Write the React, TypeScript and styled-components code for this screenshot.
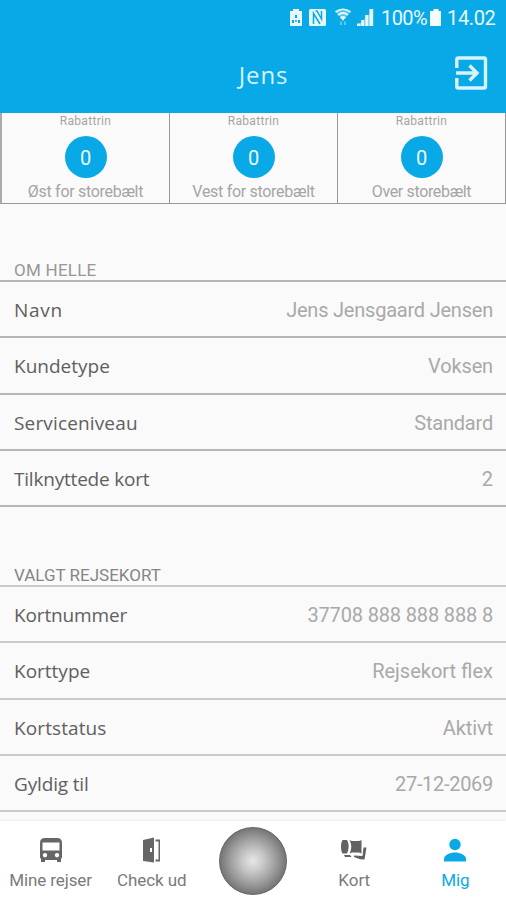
import React from "react";
import styled, { createGlobalStyle } from "styled-components";

const BLUE = "#08a9e6";

const Global = createGlobalStyle`
  * { box-sizing: border-box; }
  body { margin: 0; background: #fafafa; font-family: Roboto, sans-serif; }
`;

const Screen = styled.div`
  width: 506px;
  height: 900px;
  display: flex;
  flex-direction: column;
  overflow: hidden;
  background: #fafafa;
`;

const Header = styled.header`
  height: 113px;
  flex: none;
  background: ${BLUE};
  color: #e9f8fe;
`;

const StatusBar = styled.div`
  height: 36px;
  display: flex;
  justify-content: flex-end;
  align-items: center;
  padding-right: 10px;
`;

const StatusIcons = styled.svg`
  display: block;
  width: 93px;
  height: 36px;
`;

const StatusText = styled.span<{ $width: number; $spacing: number }>`
  width: ${(p) => p.$width}px;
  font-size: 20px;
  line-height: 36px;
  white-space: nowrap;
  letter-spacing: ${(p) => p.$spacing}px;
`;

const BatteryIcon = styled.svg`
  display: block;
  width: 18px;
  height: 36px;
`;

const TitleBar = styled.div`
  height: 77px;
  display: grid;
  grid-template-columns: 60px 1fr 60px;
  align-items: center;
`;

const Title = styled.h1`
  grid-column: 2;
  margin: 0;
  padding-left: 21px;
  text-align: center;
  font: 400 24px/30px "Open Sans", sans-serif;
  letter-spacing: 0.9px;
  color: #d7f3ff;
`;

const ExitIcon = styled.svg`
  width: 34px;
  height: 36px;
  margin: 0 0 3px 8px;
`;

const Tiles = styled.section`
  height: 91px;
  flex: none;
  display: grid;
  grid-template-columns: 168px 168px 168px;
  border-left: 2px solid #aaa;
  border-bottom: 1px solid #999;
`;

const Tile = styled.div`
  height: 90px;
  display: flex;
  flex-direction: column;
  align-items: center;
  border-right: 1px solid #999;
  color: #a5a5a5;
`;

const TileTop = styled.span`
  height: 23px;
  font-size: 12px;
  line-height: 17px;
  letter-spacing: 0.3px;
`;

const Disc = styled.span`
  width: 42px;
  height: 42px;
  flex: none;
  border-radius: 50%;
  background: ${BLUE};
  color: #eefaff;
  font-size: 20px;
  line-height: 44px;
  text-align: center;
`;

const TileName = styled.span<{ $spacing: number }>`
  height: 25px;
  font-size: 16px;
  line-height: 28px;
  white-space: nowrap;
  letter-spacing: ${(p) => p.$spacing}px;
`;

const Section = styled.section<{ $top: number }>`
  flex: none;
  padding-top: ${(p) => p.$top}px;
`;

const SectionTitle = styled.h2<{ $color: string; $spacing: number }>`
  margin: 0;
  height: 20px;
  padding-left: 14px;
  font-size: 17px;
  font-weight: 400;
  line-height: 20px;
  color: ${(p) => p.$color};
  letter-spacing: ${(p) => p.$spacing}px;
`;

const Rows = styled.div<{ $line: string }>`
  border-top: 2px solid ${(p) => p.$line};
  > div { border-bottom: 2px solid ${(p) => p.$line}; }
`;

const Row = styled.div`
  height: 56.25px;
  display: flex;
  align-items: center;
  justify-content: space-between;
  padding: 2px 13px 0 14px;
`;

const Label = styled.span<{ $spacing: number }>`
  font: 400 19px/26px "Open Sans", sans-serif;
  color: #606060;
  letter-spacing: ${(p) => p.$spacing}px;
`;

const Value = styled.span<{ $spacing: number }>`
  font-size: 20px;
  line-height: 26px;
  color: #a9a9a9;
  letter-spacing: ${(p) => p.$spacing}px;
`;

const Nav = styled.nav`
  margin-top: auto;
  height: 79px;
  flex: none;
  display: grid;
  grid-template-columns: repeat(5, 1fr);
  background: #fff;
  box-shadow: 0 -1px 2px rgba(0, 0, 0, 0.06);
`;

const NavItem = styled.a<{ $active?: boolean; $spacing?: number }>`
  display: flex;
  flex-direction: column;
  align-items: center;
  padding-top: 14px;
  font-size: 17px;
  line-height: 22px;
  white-space: nowrap;
  letter-spacing: ${(p) => p.$spacing ?? 0}px;
  color: ${(p) => (p.$active ? BLUE : "#7a7a7a")};

  svg { width: 30px; height: 30px; margin-bottom: 4px; flex: none; }
`;

const Orb = styled.span`
  align-self: start;
  justify-self: center;
  margin-top: 6px;
  width: 68px;
  height: 68px;
  border-radius: 50%;
  border: 1px solid #666;
  background: radial-gradient(circle closest-side, #e8e8e8 0%, #c5c5c5 35%, #999 72%, #757575 100%);
`;

const tiles: [name: string, spacing: number][] = [
  ["Øst for storebælt", -0.3],
  ["Vest for storebælt", -0.3],
  ["Over storebælt", -0.35],
];

type Entry = [label: string, value: string, labelSpacing: number, valueSpacing: number];

const person: Entry[] = [
  ["Navn", "Jens Jensgaard Jensen", 0.7, -0.22],
  ["Kundetype", "Voksen", 0, -0.15],
  ["Serviceniveau", "Standard", 0.15, -0.2],
  ["Tilknyttede kort", "2", -0.2, 0],
];

const card: Entry[] = [
  ["Kortnummer", "37708 888 888 888 8", -0.15, -0.15],
  ["Korttype", "Rejsekort flex", 0, 0],
  ["Kortstatus", "Aktivt", 0.1, -0.1],
  ["Gyldig til", "27-12-2069", -0.15, -0.3],
];

const List = ({ entries, line }: { entries: Entry[]; line: string }) => (
  <Rows $line={line}>
    {entries.map(([label, value, ls, vs]) => (
      <Row key={label}>
        <Label $spacing={ls}>{label}</Label>
        <Value $spacing={vs}>{value}</Value>
      </Row>
    ))}
  </Rows>
);

export default function App() {
  return (
    <>
      <Global />
      <Screen>
        <Header>
          <StatusBar>
            <StatusIcons viewBox="289 0 93 36" fill="#e6f7fd">
              <path fillRule="evenodd" d="M294 9h6v2h3v15h-12V11h3zM296 15v3h2v-3zm-3 5v3h2v-3zm3.200 0v2h1.500v-2zm2.800 0v3h2v-3z" />
              <rect x="310" y="9" width="17" height="17" rx="1.500" />
              <path d="M314.500 24V13.500L321 24M316.500 11h1.500l4.500 8V11" fill="none" stroke={BLUE} strokeWidth="1.500" />
              <path d="M336.500 12q7.500-6 15 0L344 20z" opacity=".35" />
              <g fill="none" stroke="#e6f7fd" strokeWidth="1.700">
                <path d="M336.500 12q7.500-5.500 15 0M339 15q5-4 10 0M341.500 18q2.500-2 5 0" />
              </g>
              <path d="M342 18h4l-2 3z" />
              <path d="M341 21.500h2v3.500h-2zm4 0h2v3.500h-2z" opacity=".4" />
              <path d="M358 23.500h3.500V26H358zm4.200-3.500h3v6h-3zm4-5h3.200v11h-3.200zm4.200-6h3.800v17h-3.800z" />
              <path d="M358 26l16-15v15z" opacity=".35" />
            </StatusIcons>
            <StatusText $width={48} $spacing={-0.6}>100%</StatusText>
            <BatteryIcon viewBox="0 0 18 36" fill="#f4fcff">
              <path d="M4.500 9h5v2h2.500v15H1V11h3.500z" />
            </BatteryIcon>
            <StatusText $width={49} $spacing={-0.35}>14.02</StatusText>
          </StatusBar>
          <TitleBar>
            <Title>Jens</Title>
            <ExitIcon viewBox="0 0 34 36" fill="none" stroke="#d7f3ff" strokeWidth="3.400">
              <path d="M2.800 13V4.500q0-1.500 1.500-1.500H30q1.500 0 1.500 1.500v27q0 1.500-1.500 1.500H4.300q-1.500 0-1.500-1.500V23M2 18h20M15.500 10.500 23 18l-7.500 7.500" />
            </ExitIcon>
          </TitleBar>
        </Header>
        <Tiles>
          {tiles.map(([name, spacing]) => (
            <Tile key={name}>
              <TileTop>Rabattrin</TileTop>
              <Disc>0</Disc>
              <TileName $spacing={spacing}>{name}</TileName>
            </Tile>
          ))}
        </Tiles>
        <Section $top={56}>
          <SectionTitle $color="#979797" $spacing={0.25}>OM HELLE</SectionTitle>
          <List entries={person} line="#b6b6b6" />
        </Section>
        <Section $top={58}>
          <SectionTitle $color="#858585" $spacing={0}>VALGT REJSEKORT</SectionTitle>
          <List entries={card} line="#cacaca" />
        </Section>
        <Nav>
          <NavItem $spacing={-0.1}>
            <svg viewBox="0 0 30 30" fill="#666">
              <path fillRule="evenodd" d="M4 8q0-5 5-5h12q5 0 5 5v14q0 1-1 2v3h-4v-2H9v2H5v-3q-1-1-1-2zM6.500 7.500v8h17v-8zM9 18a2.200 2.200 0 1 0 .01 0zm12 0a2.200 2.200 0 1 0 .01 0z" />
            </svg>
            Mine rejser
          </NavItem>
          <NavItem $spacing={-0.1}>
            <svg viewBox="0 0 30 30" fill="#666">
              <path fillRule="evenodd" d="M6 5 17 2.500v25L6 26zm7 8v4h2v-4z" />
              <path d="M18.500 4.500H23v22h-4.500v-2h3v-18h-3z" />
            </svg>
            Check ud
          </NavItem>
          <Orb />
          <NavItem>
            <svg viewBox="0 0 30 30" fill="#626262">
              <path d="M3.500 5H8q3.500 6 0 13.500H3.500q-1.500-2-1.500-6.700T3.500 5zM10.500 5q1.500 1 3 1h6q1.500 0 3-1v13.500q-1.500-1-3-1h-6q-1.500 0-3 1 1.800-3 1.800-6.700T10.500 5zM24.500 12.500h3l-2 12-4.500-.3-6-2.200v-1.500l8.500.5zM5 20h6l1.500 2H6z" />
            </svg>
            Kort
          </NavItem>
          <NavItem $active>
            <svg viewBox="0 0 30 30" fill={BLUE}>
              <circle cx="15" cy="9.500" r="5.700" />
              <path d="M4 26.500v-2.500c0-4 6-6.500 11-6.500s11 2.500 11 6.500v2.500z" />
            </svg>
            Mig
          </NavItem>
        </Nav>
      </Screen>
    </>
  );
}
